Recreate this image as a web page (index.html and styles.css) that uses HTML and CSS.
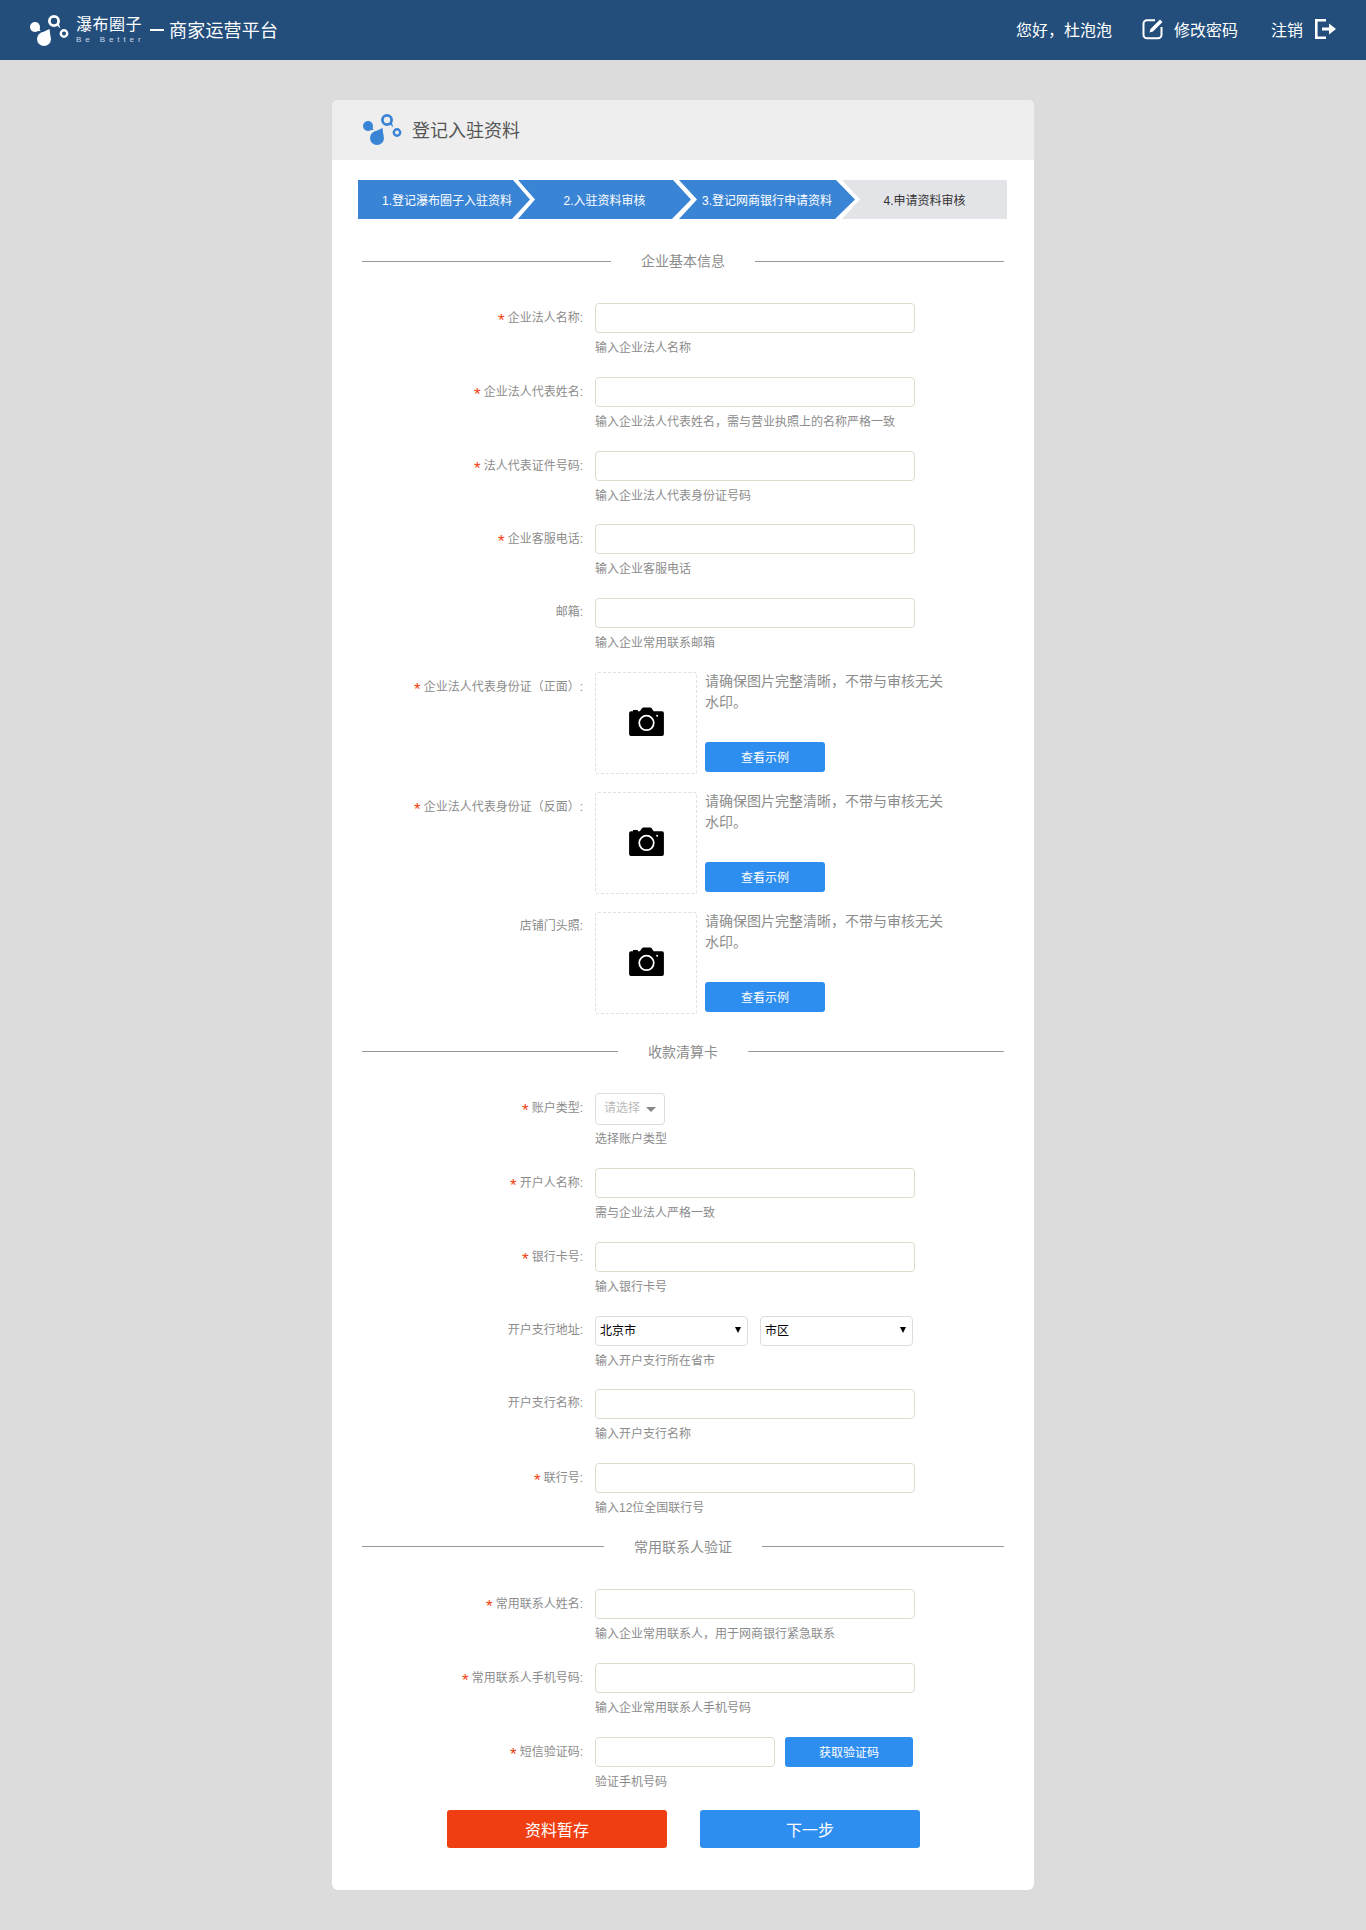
FILE: index.html
```html
<!DOCTYPE html>
<html lang="zh-CN">
<head>
<meta charset="utf-8">
<title>商家运营平台</title>
<link rel="stylesheet" href="styles.css">
</head>
<body>
<svg class="defs" width="0" height="0">
  <symbol id="cam" viewBox="0 0 36 30">
    <path d="M3 4.500h1V3h5v1.500h2.200L13.500 1a1.500 1.500 0 0 1 1.200-.6h7.200c.5 0 1 .2 1.200.6l2.300 3.500H34a2 2 0 0 1 2 2V28a2 2 0 0 1-2 2H2a2 2 0 0 1-2-2V6.500a2 2 0 0 1 2-2z" fill="#000"/>
    <circle cx="18" cy="16.500" r="7.500" fill="none" stroke="#fff" stroke-width="1.800"/>
    <circle cx="29" cy="9" r="1" fill="#fff"/>
  </symbol>
  <symbol id="mark" viewBox="0 0 40 32">
    <circle cx="5" cy="13" r="5"/>
    <path d="M6.500 8.200L10.500 17 2.500 17.300z"/>
    <circle cx="14" cy="25" r="7"/>
    <path d="M10 19.500L19.500 15 20.500 23z"/>
    <circle cx="24" cy="7" r="4.600" fill="none" stroke="currentColor" stroke-width="2.800"/>
    <path d="M26.500 11L30.500 14.500 28.500 9z"/>
    <circle cx="34" cy="19.500" r="3.200" fill="none" stroke="currentColor" stroke-width="2.400"/>
  </symbol>
</svg>
<header class="topbar">
  <div class="brand">
    <svg class="logo light"><use href="#mark"/></svg>
    <div class="brand-name">
      <span class="brand-cn">瀑布圈子</span>
      <span class="brand-en">Be Better</span>
    </div>
    <span class="brand-dash"></span>
    <span class="brand-title">商家运营平台</span>
  </div>
  <nav class="topnav">
    <span class="hello">您好，杜泡泡</span>
    <span class="navitem">
      <svg width="22" height="22" viewBox="0 0 22 22"><path d="M13 2.200H5a3.500 3.500 0 0 0-3.500 3.500v11A3.500 3.500 0 0 0 5 20.200h11a3.500 3.500 0 0 0 3.500-3.500V9" fill="none" stroke="#fff" stroke-width="2"/><path d="M7.500 14.500l1-3.500L18 1.500l2.500 2.500L11 13.500z" fill="#fff"/></svg>
      修改密码
    </span>
    <span class="navitem last">
      注销
      <svg width="22" height="20" viewBox="0 0 22 20"><path d="M11 1.300H1.300v17.400H11" fill="none" stroke="#fff" stroke-width="2.600"/><path d="M7 8.500h7V4.500l7 5.500-7 5.500v-4H7z" fill="#fff"/></svg>
    </span>
  </nav>
</header>

<main class="card">
  <div class="card-head">
    <svg class="logo blue"><use href="#mark"/></svg>
    <h1>登记入驻资料</h1>
  </div>

  <div class="steps">
    <div class="step s1 on"><span>1.登记瀑布圈子入驻资料</span></div>
    <div class="step s2 on"><span>2.入驻资料审核</span></div>
    <div class="step s3 on"><span>3.登记网商银行申请资料</span></div>
    <div class="step s4"><span>4.申请资料审核</span></div>
  </div>

  <div class="section first"><i></i><span>企业基本信息</span><i></i></div>

  <div class="row"><label class="lab req">企业法人名称:</label><div class="ctl"><div class="box"></div><p class="hint">输入企业法人名称</p></div></div>
  <div class="row"><label class="lab req">企业法人代表姓名:</label><div class="ctl"><div class="box"></div><p class="hint">输入企业法人代表姓名，需与营业执照上的名称严格一致</p></div></div>
  <div class="row"><label class="lab req">法人代表证件号码:</label><div class="ctl"><div class="box"></div><p class="hint">输入企业法人代表身份证号码</p></div></div>
  <div class="row"><label class="lab req">企业客服电话:</label><div class="ctl"><div class="box"></div><p class="hint">输入企业客服电话</p></div></div>
  <div class="row"><label class="lab">邮箱:</label><div class="ctl"><div class="box"></div><p class="hint">输入企业常用联系邮箱</p></div></div>

  <div class="row up"><label class="lab req">企业法人代表身份证（正面）:</label><div class="upbox"><svg class="cam"><use href="#cam"/></svg></div><div class="upside"><p>请确保图片完整清晰，不带与审核无关水印。</p><span class="btn view">查看示例</span></div></div>
  <div class="row up"><label class="lab req">企业法人代表身份证（反面）:</label><div class="upbox"><svg class="cam"><use href="#cam"/></svg></div><div class="upside"><p>请确保图片完整清晰，不带与审核无关水印。</p><span class="btn view">查看示例</span></div></div>
  <div class="row up"><label class="lab">店铺门头照:</label><div class="upbox"><svg class="cam"><use href="#cam"/></svg></div><div class="upside"><p>请确保图片完整清晰，不带与审核无关水印。</p><span class="btn view">查看示例</span></div></div>

  <div class="section second"><i></i><span>收款清算卡</span><i></i></div>

  <div class="row tall"><label class="lab req">账户类型:</label><div class="ctl"><div class="pick">请选择<b></b></div><p class="hint">选择账户类型</p></div></div>
  <div class="row"><label class="lab req">开户人名称:</label><div class="ctl"><div class="box"></div><p class="hint">需与企业法人严格一致</p></div></div>
  <div class="row"><label class="lab req">银行卡号:</label><div class="ctl"><div class="box"></div><p class="hint">输入银行卡号</p></div></div>
  <div class="row"><label class="lab">开户支行地址:</label><div class="ctl"><div class="sels"><div class="sel">北京市<b></b></div><div class="sel">市区<b></b></div></div><p class="hint">输入开户支行所在省市</p></div></div>
  <div class="row"><label class="lab">开户支行名称:</label><div class="ctl"><div class="box"></div><p class="hint">输入开户支行名称</p></div></div>
  <div class="row"><label class="lab req">联行号:</label><div class="ctl"><div class="box"></div><p class="hint">输入12位全国联行号</p></div></div>

  <div class="section third"><i></i><span>常用联系人验证</span><i></i></div>

  <div class="row"><label class="lab req">常用联系人姓名:</label><div class="ctl"><div class="box"></div><p class="hint">输入企业常用联系人，用于网商银行紧急联系</p></div></div>
  <div class="row"><label class="lab req">常用联系人手机号码:</label><div class="ctl"><div class="box"></div><p class="hint">输入企业常用联系人手机号码</p></div></div>
  <div class="row"><label class="lab req">短信验证码:</label><div class="ctl"><div class="sms"><div class="box short"></div><span class="btn code">获取验证码</span></div><p class="hint">验证手机号码</p></div></div>

  <div class="actions">
    <span class="btn big orange">资料暂存</span>
    <span class="btn big">下一步</span>
  </div>
</main>
</body>
</html>
```

FILE: styles.css
```css
* { box-sizing: border-box; }
html, body { margin: 0; padding: 0; }
body {
  background: #dcdcdc;
  font-family: "Liberation Sans", "Noto Sans CJK SC", sans-serif;
  color: #8c8c8c;
  font-size: 12px;
  height: 1930px;
  overflow: hidden;
}
.defs { position: absolute; }
p, h1 { margin: 0; font-weight: 400; }

.logo { width: 40px; height: 32px; flex: none; }
.logo.light { color: #fff; fill: #fff; }
.logo.blue { color: #3a84d6; fill: #3a84d6; }

.topbar {
  height: 60px;
  background: #234e7c;
  color: #fff;
  display: flex;
  justify-content: space-between;
  align-items: center;
  padding: 0 29px 0 30px;
}
.brand { display: flex; align-items: center; }
.brand-name { display: flex; flex-direction: column; margin-left: 6px; width: 70px; }
.brand-cn { font-size: 16px; line-height: 20px; letter-spacing: .5px; margin-top: -1px; }
.brand-en { font-size: 8px; line-height: 10px; letter-spacing: 3.900px; color: #cfd9e5; white-space: nowrap; }
.brand-dash { width: 14px; height: 2px; background: #fff; margin-left: 4px; }
.brand-title { font-size: 18px; margin-left: 5px; letter-spacing: .2px; margin-bottom: 3px; }
.topnav { display: flex; align-items: center; font-size: 16px; margin-bottom: 2px; }
.hello { margin-right: 30px; }
.navitem { display: flex; align-items: center; gap: 10px; margin-right: 33px; }
.navitem.last { margin-right: 0; gap: 12px; }

.card {
  width: 702px;
  height: 1790px;
  margin: 40px auto 0;
  background: #fff;
  border-radius: 6px;
  overflow: hidden;
}
.card-head {
  height: 60px;
  background: #eee;
  display: flex;
  align-items: center;
  padding-left: 31px;
  gap: 9px;
}
.card-head .logo { margin-bottom: 2px; }
.card-head h1 { font-size: 18px; color: #555; margin-bottom: 2px; }

.steps { display: flex; margin: 20px 27px 0 26px; height: 39px; font-size: 12px; color: #fff; }
.step { display: flex; align-items: center; justify-content: center; background: #e3e4e8; color: #333; height: 39px; }
.step.on { background: #3a84d6; color: #fff; }
.s1 { width: 172px; clip-path: polygon(0 0, 155px 0, 172px 50%, 154px 100%, 0 100%); padding-left: 6px; margin-right: -12px; }
.s2 { width: 173px; clip-path: polygon(0 0, 155px 0, 173px 50%, 154px 100%, 0 100%, 17px 50%); margin-right: -12px; }
.s3 { width: 176px; clip-path: polygon(0 0, 157px 0, 176px 50%, 156px 100%, 0 100%, 18px 50%); margin-right: -13px; }
.s4 { flex: 1; clip-path: polygon(0 0, 100% 0, 100% 100%, 0 100%, 18px 50%); }

.section { display: flex; align-items: center; margin: 0 30px; font-size: 14px; color: #8c8c8c; height: 20px; }
.section i { flex: 1; height: 1px; background: #999; }
.section span { text-align: center; margin-top: -2px; }
.first { margin-top: 32px; margin-bottom: 32px; }
.first span { width: 144px; }
.second { margin-top: 10px; margin-bottom: 31px; }
.second span { width: 130px; }
.third { margin-bottom: 32px; }
.third span { width: 158px; }

.row { display: flex; height: 73.800px; }
.lab { width: 263px; padding-right: 12px; text-align: right; line-height: 28px; white-space: nowrap; }
.req::before { content: "*"; color: #f03e12; font-size: 17px; margin-right: 3px; position: relative; top: 4px; }
.ctl { width: 420px; }
.box { width: 320px; height: 30px; border: 1px solid #deddcd; border-radius: 4px; background: #fff; }
.hint { line-height: 18px; margin-top: 6px; }

.up { height: 120px; }
.upbox {
  width: 102px; height: 102px;
  border: 1px dashed #e0e0e0;
  border-radius: 3px;
  display: flex; align-items: center; justify-content: center;
}
.cam { width: 35px; height: 29px; margin-top: -2px; }
.upside { width: 245px; margin-left: 8px; display: flex; flex-direction: column; }
.upside p { font-size: 14px; line-height: 21px; height: 71px; margin-top: -1px; }
.btn {
  display: flex; align-items: center; justify-content: center;
  background: #2e8ef0; color: #fff; border-radius: 3px;
  font-size: 12px; height: 30px;
}
.view { width: 120px; }

.tall { height: 75px; }
.pick {
  width: 70px; height: 32px;
  border: 1px solid #ddd; border-radius: 4px;
  color: #bbb; line-height: 28px; padding-left: 8px;
  position: relative;
}
.pick b { position: absolute; right: 8px; top: 13px; border: 5px solid transparent; border-top-color: #888; border-bottom: 0; }
.tall .hint { margin-top: 5px; }
.sels { display: flex; gap: 12px; }
.sel {
  width: 153px; height: 30px;
  border: 1px solid #ddd; border-radius: 4px;
  color: #000; line-height: 28px; padding-left: 4px; font-size: 12px;
  position: relative;
}
.sel b { position: absolute; right: 6px; top: 10px; border: 3.500px solid transparent; border-top: 6px solid #000; border-bottom: 0; }
.sms { display: flex; gap: 10px; }
.short { width: 180px; }
.code { width: 128px; }

.actions { display: flex; gap: 33px; margin: 0 0 0 115px; }
.big { width: 220px; height: 38px; font-size: 16px; }
.orange { background: #ef3e12; }
```
